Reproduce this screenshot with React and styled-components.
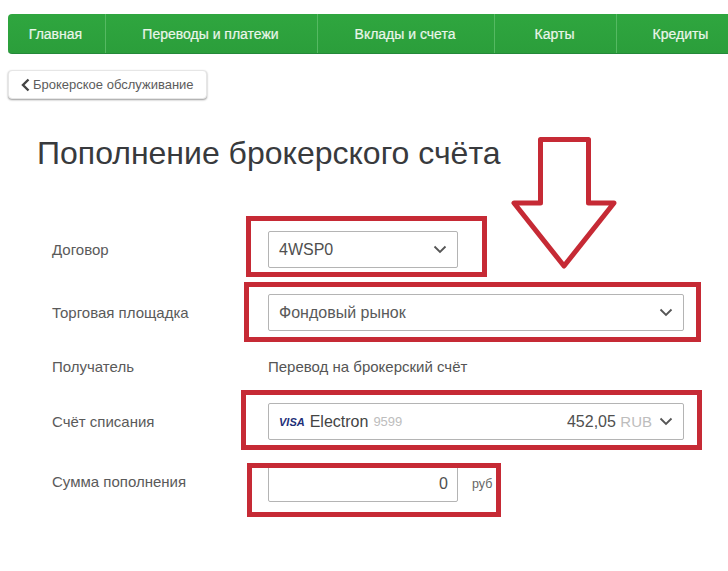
import React from 'react'
import styled, { createGlobalStyle } from 'styled-components'

const Global = createGlobalStyle`
html, body {
    margin: 0;
    padding: 0;
    background: #fff;
    overflow: hidden;
}
* { box-sizing: border-box; }
`

const Page = styled.div`
position: relative;
width: 728px;
height: 571px;
overflow: hidden;
padding-top: 14px;
font-family: "Liberation Sans", Arial, sans-serif;
color: #4a4a4a;
`

const Nav = styled.nav`
display: flex;
width: 738px;
height: 40px;
margin-left: 8px;
background: linear-gradient(180deg, #2fa63f 0%, #2b9e3b 100%);
border-bottom: 1px solid #24883a;
border-radius: 4px 0 0 4px;
`

const NavItem = styled.a`
flex: 0 0 ${props => props.$w}px;
display: flex;
align-items: center;
justify-content: center;
padding-right: 2px;
font-size: 14px;
color: #eaf6ea;
-webkit-text-stroke: 0.2px #eaf6ea;
border-left: ${props => props.$first ? 'none' : '1px solid #55b962'};
`

const BackButton = styled.button`
display: flex;
align-items: center;
gap: 3px;
width: 199px;
height: 29px;
margin: 16px 0 0 8px;
padding: 0 0 0 12px;
background: #fff;
border: 1px solid #e6e6e6;
border-radius: 4px;
box-shadow: 0 1px 2px rgba(0, 0, 0, 0.4);
font-family: inherit;
font-size: 13px;
color: #5c5c5c;
`

const Title = styled.h1`
margin: 36px 0 0 37px;
font-size: 32px;
line-height: 36px;
font-weight: 400;
color: #383a3d;
`

const Form = styled.div`
display: flex;
flex-direction: column;
gap: 26px;
margin: 60px 0 0 52px;
`

const Row = styled.div`
display: grid;
grid-template-columns: 216px 416px;
align-items: ${props => props.$top ? 'start' : 'center'};
`

const Label = styled.div`
font-size: 15px;
line-height: 20px;
color: #5a5a5a;
padding-top: ${props => props.$top ? '6px' : '0'};
`

const Select = styled.div`
display: flex;
align-items: center;
justify-content: space-between;
width: ${props => props.$w}px;
height: 37px;
padding: 0 10px;
background: #fff;
border: 1px solid #b4b4b4;
border-radius: 2px;
font-size: 16px;
color: #5a5a5a;
`

const PlainValue = styled.div`
font-size: 15px;
line-height: 20px;
color: #555;
`

const Side = styled.span`
display: flex;
align-items: center;
gap: ${props => props.$gap}px;
`

const Visa = styled.span`
font-size: 11px;
font-weight: 700;
font-style: italic;
color: #1e2f78;
`

const CardName = styled.span`
font-size: 16px;
color: #444;
`

const Muted = styled.span`
font-size: ${props => props.$size}px;
color: #bdbdbd;
`

const Amount = styled.span`
font-size: 16px;
color: #4f4f4f;
`

const Chevron = styled.svg`
width: 14px;
height: 9px;
flex: none;
fill: none;
stroke: #555;
stroke-width: 1.8;
`

const AmountField = styled.div`
display: flex;
align-items: center;
gap: 14px;
`

const Input = styled.div`
width: 190px;
height: 36px;
padding: 0 9px;
border: 1px solid #b4b4b4;
border-radius: 2px;
background: #fff;
font-size: 16px;
line-height: 34px;
text-align: right;
color: #4f4f4f;
`

const Unit = styled.span`
font-size: 12.5px;
color: #666;
`

// red marks drawn over the screenshot
const Callout = styled.div`
position: absolute;
left: ${props => props.$x}px;
top: ${props => props.$y}px;
width: ${props => props.$w}px;
height: ${props => props.$h}px;
border: 5px solid #c62a35;
`

const Arrow = styled.svg`
position: absolute;
left: 508px;
top: 133px;
width: 112px;
height: 140px;
`

const Down = () => (
    <Chevron viewBox="0 0 14 9"><path d="M1.5 1.5 L7 7 L12.5 1.5" /></Chevron>
)

const App = () => {
  return (
    <Page>
        <Global />
        <Nav>
            <NavItem $w={97} $first>Главная</NavItem>
            <NavItem $w={212}>Переводы и платежи</NavItem>
            <NavItem $w={177}>Вклады и счета</NavItem>
            <NavItem $w={122}>Карты</NavItem>
            <NavItem $w={130}>Кредиты</NavItem>
        </Nav>
        <BackButton>
            <svg width="9" height="14" viewBox="0 0 9 14"><path d="M7.5 1.5 L2 7 L7.5 12.5" fill="none" stroke="#444" strokeWidth="2.4" /></svg>
            Брокерское обслуживание
        </BackButton>
        <Title>Пополнение брокерского счёта</Title>
        <Form>
            <Row>
                <Label>Договор</Label>
                <Select $w={190}>
                    <Amount>4WSP0</Amount>
                    <Down />
                </Select>
            </Row>
            <Row>
                <Label>Торговая площадка</Label>
                <Select $w={416}>
                    <span>Фондовый рынок</span>
                    <Down />
                </Select>
            </Row>
            <Row>
                <Label>Получатель</Label>
                <PlainValue>Перевод на брокерский счёт</PlainValue>
            </Row>
            <Row>
                <Label>Счёт списания</Label>
                <Select $w={416}>
                    <Side $gap={5}>
                        <Visa>VISA</Visa>
                        <CardName>Electron</CardName>
                        <Muted $size={13}>9599</Muted>
                    </Side>
                    <Side $gap={7}>
                        <Amount>452,05 <Muted $size={15}>RUB</Muted></Amount>
                        <Down />
                    </Side>
                </Select>
            </Row>
            <Row $top>
                <Label $top>Сумма пополнения</Label>
                <AmountField>
                    <Input>0</Input>
                    <Unit>руб</Unit>
                </AmountField>
            </Row>
        </Form>
        <Callout $x={246} $y={216} $w={241} $h={61} />
        <Callout $x={244} $y={282} $w={457} $h={60} />
        <Callout $x={241} $y={390} $w={461} $h={60} />
        <Callout $x={247} $y={463} $w={254} $h={54} />
        <Arrow viewBox="508 133 112 140">
            <path d="M540.5 139.5 H588.5 V203 H614 L564 266 L514 203 H540.5 Z" fill="#fff" stroke="#c62a35" strokeWidth="5" strokeLinejoin="round" />
        </Arrow>
    </Page>
  )
}

export default App
